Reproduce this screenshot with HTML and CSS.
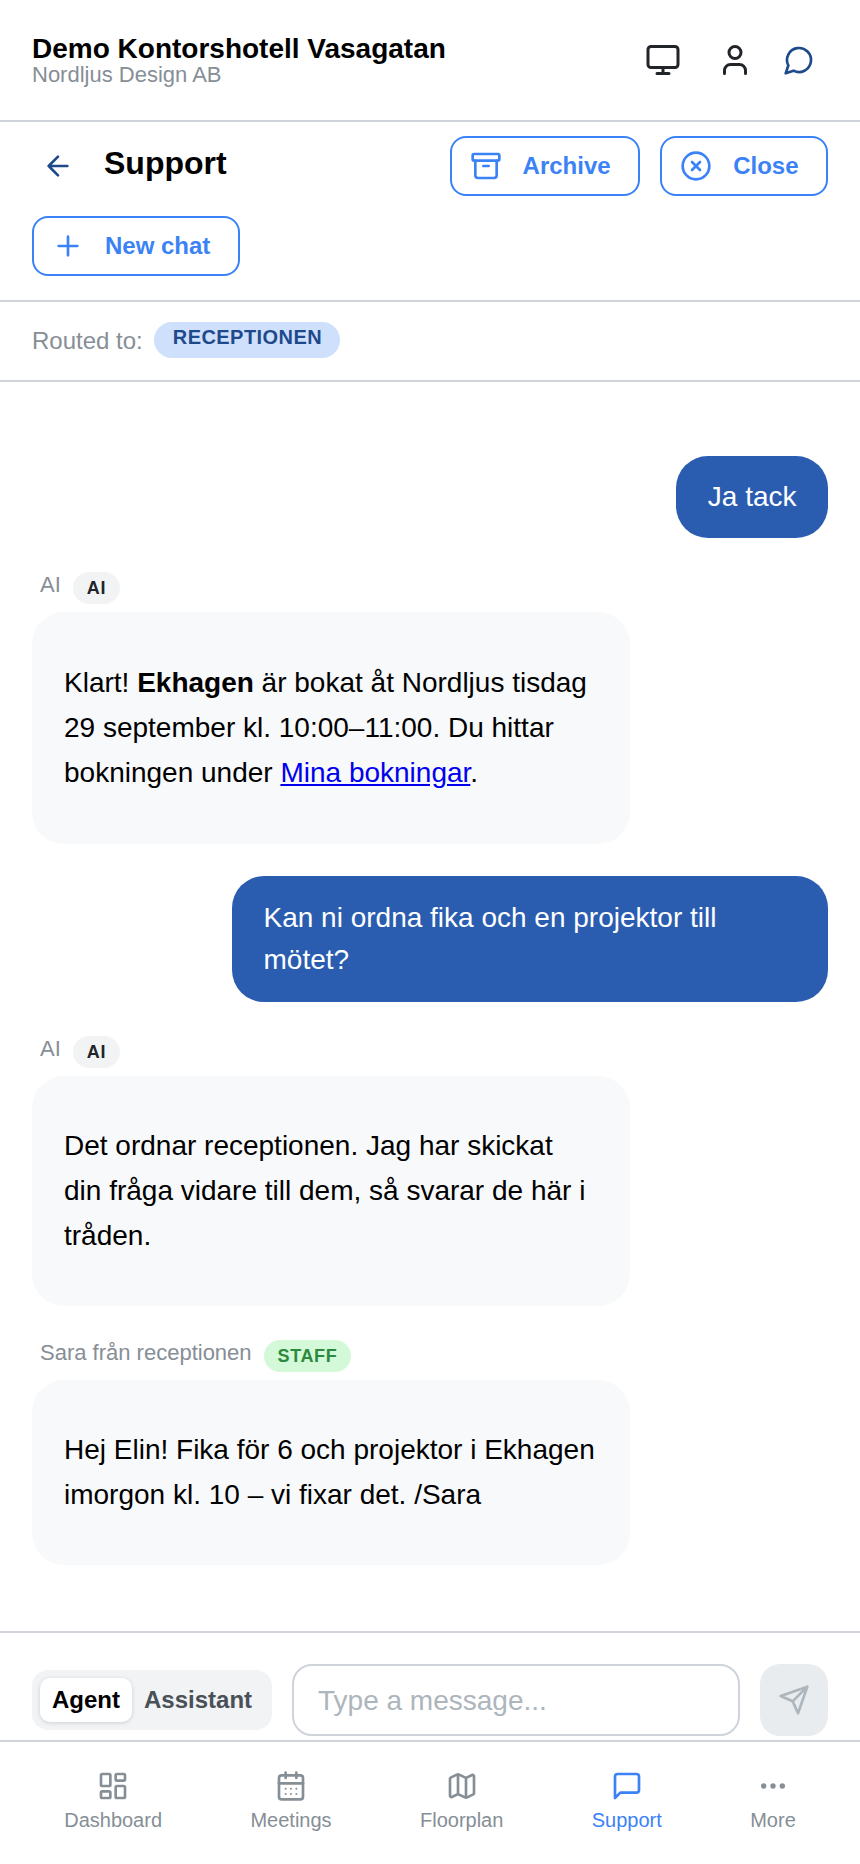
FILE: index.html
```html
<!DOCTYPE html>
<html lang="sv">
<head>
  <meta charset="UTF-8" />
  <meta name="viewport" content="width=device-width, initial-scale=1.0" />
  <title>Support</title>
  <link rel="stylesheet" href="styles.css">
</head>
<body>
  <div class="app">
    <header class="top">
      <div class="top-text">
        <div class="top-title">Demo Kontorshotell Vasagatan</div>
        <div class="top-sub">Nordljus Design AB</div>
      </div>
      <div class="top-icons">
        <svg class="icon-monitor" viewBox="0 0 24 24"><rect x="2" y="3" width="20" height="14" rx="2"/><path d="M8 21h8M12 17v4"/></svg>
        <svg class="icon-user" viewBox="0 0 24 24"><circle cx="12" cy="7" r="4"/><path d="M5 21v-2a4 4 0 0 1 4-4h6a4 4 0 0 1 4 4v2"/></svg>
        <svg class="icon-chat" viewBox="0 0 24 24"><path d="M7.9 20A9 9 0 1 0 4 16.1L2 22Z"/></svg>
      </div>
    </header>

    <section class="bar">
      <div class="bar-row">
        <svg class="icon-back" viewBox="0 0 24 24"><path d="M19 12H5M12 19l-7-7 7-7"/></svg>
        <h1 class="bar-title">Support</h1>
        <button class="btn">
          <svg viewBox="0 0 24 24"><rect x="2" y="3" width="20" height="5" rx="1"/><path d="M4 8v11a2 2 0 0 0 2 2h12a2 2 0 0 0 2-2V8M10 12h4"/></svg>
          Archive
        </button>
        <button class="btn">
          <svg viewBox="0 0 24 24"><circle cx="12" cy="12" r="10"/><path d="m15 9-6 6M9 9l6 6"/></svg>
          Close
        </button>
      </div>
      <button class="btn btn-new">
        <svg viewBox="0 0 24 24"><path d="M5 12h14M12 5v14"/></svg>
        New chat
      </button>
    </section>

    <section class="routed">
      <span class="routed-label">Routed to:</span>
      <span class="routed-pill">RECEPTIONEN</span>
    </section>

    <main class="chat">
      <div class="msg-user">Ja tack</div>

      <div class="msg-head">
        <span class="msg-name">AI</span>
        <span class="tag">AI</span>
      </div>
      <div class="msg-bot msg-first">Klart! <strong>Ekhagen</strong> är bokat åt Nordljus tisdag 29 september kl. 10:00–11:00. Du hittar bokningen under <a href="#">Mina bokningar</a>.</div>

      <div class="msg-user msg-long">Kan ni ordna fika och en projektor till mötet?</div>

      <div class="msg-head">
        <span class="msg-name">AI</span>
        <span class="tag">AI</span>
      </div>
      <div class="msg-bot">Det ordnar receptionen. Jag har skickat din fråga vidare till dem, så svarar de här i tråden.</div>

      <div class="msg-head">
        <span class="msg-name">Sara från receptionen</span>
        <span class="tag tag-staff">STAFF</span>
      </div>
      <div class="msg-bot">Hej Elin! Fika för 6 och projektor i Ekhagen imorgon kl. 10 – vi fixar det. /Sara</div>
    </main>

    <section class="composer">
      <div class="toggle">
        <span class="toggle-item active">Agent</span>
        <span class="toggle-item">Assistant</span>
      </div>
      <input class="composer-input" type="text" placeholder="Type a message..." />
      <button class="send">
        <svg viewBox="0 0 24 24"><path d="m22 2-7 20-4-9-9-4ZM22 2 11 13"/></svg>
      </button>
    </section>

    <nav class="nav">
      <a class="nav-item" href="#">
        <svg viewBox="0 0 24 24"><rect x="3" y="3" width="7" height="9" rx="1"/><rect x="14" y="3" width="7" height="5" rx="1"/><rect x="14" y="12" width="7" height="9" rx="1"/><rect x="3" y="16" width="7" height="5" rx="1"/></svg>
        Dashboard
      </a>
      <a class="nav-item" href="#">
        <svg viewBox="0 0 24 24"><path d="M8 2v4M16 2v4"/><rect x="3" y="4" width="18" height="18" rx="2"/><path d="M3 10h18"/><path class="dots" d="M8 14h.01M12 14h.01M16 14h.01M8 18h.01M12 18h.01M16 18h.01"/></svg>
        Meetings
      </a>
      <a class="nav-item" href="#">
        <svg viewBox="0 0 24 24"><path d="M14.106 5.553a2 2 0 0 0 1.788 0l3.659-1.83A1 1 0 0 1 21 4.619v12.764a1 1 0 0 1-.553.894l-4.553 2.277a2 2 0 0 1-1.788 0l-4.212-2.106a2 2 0 0 0-1.788 0l-3.659 1.83A1 1 0 0 1 3 19.381V6.618a1 1 0 0 1 .553-.894l4.553-2.277a2 2 0 0 1 1.788 0zM15 5.764v15M9 3.236v15"/></svg>
        Floorplan
      </a>
      <a class="nav-item active" href="#">
        <svg viewBox="0 0 24 24"><path d="M21 15a2 2 0 0 1-2 2H7l-4 4V5a2 2 0 0 1 2-2h14a2 2 0 0 1 2 2z"/></svg>
        Support
      </a>
      <a class="nav-item" href="#">
        <svg viewBox="0 0 24 24"><circle cx="12" cy="12" r="1"/><circle cx="19" cy="12" r="1"/><circle cx="5" cy="12" r="1"/></svg>
        More
      </a>
    </nav>
  </div>
</body>
</html>
```

FILE: styles.css
```css
* {
  box-sizing: border-box;
}
body {
  margin: 0;
  font-family: "Liberation Sans", Arial, sans-serif;
  background: white;
  color: black;
}
svg {
  fill: none;
  stroke: currentColor;
  stroke-width: 2;
  stroke-linecap: round;
  stroke-linejoin: round;
  flex-shrink: 0;
}
button {
  font-family: inherit;
}
.app {
  display: flex;
  flex-direction: column;
  height: 1864px;
}

/* top header */
.top {
  display: flex;
  align-items: center;
  justify-content: space-between;
  height: 122px;
  padding: 0 32px;
  border-bottom: 2px solid #ced4da;
}
.top-title {
  font-size: 28px;
  font-weight: bold;
  line-height: 32px;
}
.top-sub {
  font-size: 22px;
  line-height: 24px;
  margin-top: -2px;
  color: #868e96;
}
.top-icons {
  display: flex;
  align-items: center;
  gap: 36px;
  padding-right: 13px;
}
.icon-monitor {
  width: 36px;
  height: 36px;
  color: #212529;
}
.icon-user {
  width: 36px;
  height: 36px;
  color: #212529;
  margin-right: -6px;
}
.icon-chat {
  width: 32px;
  height: 32px;
  color: #1e4a8c;
}

/* support bar */
.bar {
  padding: 14px 32px 24px;
  border-bottom: 2px solid #ced4da;
}
.bar-row {
  display: flex;
  align-items: center;
  gap: 20px;
  margin-bottom: 20px;
}
.icon-back {
  width: 32px;
  height: 32px;
  margin-left: 10px;
  color: #1e4a8c;
}
.bar-title {
  flex: 1;
  margin: -6px 0 0 10px;
  font-size: 32px;
  line-height: 40px;
}
.btn {
  display: flex;
  align-items: center;
  gap: 21px;
  height: 60px;
  padding: 0 27.5px 0 18px;
  background: white;
  border: 2px solid #3b82f6;
  border-radius: 16px;
  color: #3b82f6;
  font-size: 24px;
  font-weight: bold;
}
.btn svg {
  width: 32px;
  height: 32px;
}

/* routed */
.routed {
  display: flex;
  align-items: center;
  gap: 11px;
  height: 80px;
  padding: 0 32px;
  border-bottom: 2px solid #ced4da;
}
.routed-label {
  font-size: 24px;
  color: #868e96;
}
.routed-pill {
  height: 36px;
  padding: 4px 18px 0 19px;
  margin-top: -2px;
  background: #cfe0fc;
  border-radius: 18px;
  color: #1e4a8c;
  font-size: 20px;
  font-weight: bold;
  letter-spacing: 0.45px;
}

/* messages */
.chat {
  flex: 1;
  display: flex;
  flex-direction: column;
  align-items: flex-start;
  padding: 74px 32px 0;
}
.msg-user {
  align-self: flex-end;
  max-width: 596px;
  padding: 20px 31.5px;
  margin-bottom: 34px;
  background: #2a5db0;
  border-radius: 32px;
  color: white;
  font-size: 28px;
  line-height: 42px;
}
.msg-long {
  padding-top: 21px;
  padding-bottom: 21px;
}
.msg-head {
  display: flex;
  align-items: center;
  gap: 12px;
  padding-left: 8px;
  margin-bottom: 8px;
}
.msg-name {
  font-size: 22px;
  color: #868e96;
  margin-top: -6px;
}
.tag {
  display: block;
  height: 32px;
  padding: 0 14px;
  background: #f1f3f5;
  border-radius: 16px;
  color: #212529;
  font-size: 18px;
  font-weight: bold;
  line-height: 33px;
  letter-spacing: 0.6px;
}
.tag-staff {
  background: #d3f9d8;
  color: #2b8a3e;
}
.msg-bot {
  width: 598px;
  padding: 47px 34px 48px 32px;
  margin-bottom: 34px;
  background: #f8f9fa;
  border-radius: 32px;
  font-size: 28px;
  line-height: 45px;
}
.msg-first {
  padding-top: 48px;
  padding-bottom: 49px;
  margin-bottom: 32px;
}

/* composer */
.composer {
  display: flex;
  align-items: center;
  gap: 20px;
  height: 109px;
  padding: 31px 32px 4px;
  border-top: 2px solid #ced4da;
}
.toggle {
  display: flex;
  align-items: center;
  gap: 12px;
  width: 240px;
  height: 60px;
  padding: 0 8px;
  background: #f1f3f5;
  border-radius: 16px;
  flex-shrink: 0;
}
.toggle-item {
  padding: 8px 0;
  font-size: 24px;
  font-weight: bold;
  color: #495057;
}
.toggle-item.active {
  padding: 8px 12px;
  height: 44px;
  line-height: 28px;
  background: white;
  border-radius: 10px;
  box-shadow: 0 1px 4px rgba(0, 0, 0, 0.15);
  color: black;
}
.composer-input {
  flex: 1;
  min-width: 0;
  height: 72px;
  padding: 2px 24px 0;
  border: 2px solid #ced4da;
  border-radius: 20px;
  font-family: inherit;
  font-size: 28px;
  outline: none;
}
.composer-input::placeholder {
  color: #adb5bd;
}
.send {
  display: flex;
  align-items: center;
  justify-content: center;
  width: 68px;
  height: 72px;
  padding: 0;
  background: #e9ecef;
  border: none;
  border-radius: 20px;
  color: #adb5bd;
}
.send svg {
  width: 32px;
  height: 32px;
}

/* bottom nav */
.nav {
  display: flex;
  justify-content: space-around;
  height: 124px;
  padding: 28px 20px 0;
  border-top: 2px solid #ced4da;
}
.nav-item {
  display: flex;
  flex-direction: column;
  align-items: center;
  gap: 7px;
  color: #868e96;
  font-size: 20px;
  text-decoration: none;
}
.nav-item svg {
  width: 32px;
  height: 32px;
}
.nav-item.active {
  color: #3b82f6;
}
.dots {
  stroke-width: 1.5;
}
```
